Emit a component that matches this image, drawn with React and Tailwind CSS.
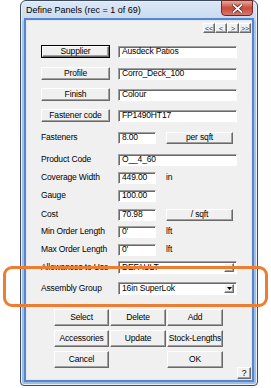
import React from "react";

const raised =
  "flex items-center justify-center bg-[#f0f0f0] border border-t-white border-l-white border-r-[#696969] border-b-[#696969] shadow-[inset_-1px_-1px_0_#a0a0a0]";
const sunken =
  "flex items-center bg-white border border-t-[#a0a0a0] border-l-[#a0a0a0] border-r-white border-b-white shadow-[inset_1px_1px_0_#696969] pl-[3px]";

const Label = ({ children }) => <div className="w-[77px] shrink-0">{children}</div>;

const Combo = ({ value }) => (
  <div className={`${sunken} w-[119px] h-[13px] justify-between pr-[2px]`}>
    <span>{value}</span>
    <div className={`${raised} w-[10px] h-[9px]`}>
      <svg width="5" height="3" viewBox="0 0 5 3">
        <path d="M0 0h5L2.5 3z" fill="#000" />
      </svg>
    </div>
  </div>
);

export default function App() {
  const rows = [
    { mt: "mt-[9px]", btn: "Profile", value: "Corro_Deck_100" },
    { mt: "mt-[8px]", btn: "Finish", value: "Colour" },
    { mt: "mt-[8px]", btn: "Fastener code", value: "FP1490HT17" },
  ];

  return (
    <div className="relative w-[271px] h-[388px] bg-white overflow-hidden font-['Liberation_Sans',Arial,sans-serif] text-[8.5px] leading-none text-black tracking-[-0.15px]">
      <div className="ml-[20px] w-[238px] h-[386px] flex flex-col rounded-t-[6px] rounded-b-[4px] border border-[#3c4b60] bg-[linear-gradient(to_bottom,#dce8f7_0px,#c8daf0_19px,#a9c5ea_20px,#9dbde6_100%)] shadow-[inset_0_0_0_1px_#e8f0fa]">
        {/* title bar */}
        <div className="h-[19px] flex items-start justify-between pl-[5px] pr-[4px]">
          <span className="mt-[5px] text-[9px] tracking-normal">Define Panels (rec = 1 of 69)</span>
          <div className="w-[32px] h-[16px] -mt-px flex items-center justify-center rounded-b-[4px] border border-[#6b2b2b] bg-gradient-to-b from-[#e9a898] via-[#c94a3a] to-[#d9766c]">
            <svg width="11" height="9" viewBox="0 0 11 9">
              <path d="M1.5 1l8 7M9.5 1l-8 7" stroke="#4a1a1a" strokeWidth="3.2" strokeLinecap="square" />
              <path d="M1.5 1l8 7M9.5 1l-8 7" stroke="#fff" strokeWidth="1.8" strokeLinecap="square" />
            </svg>
          </div>
        </div>

        {/* client area */}
        <div className="flex-1 mx-[5px] mb-[5px] border border-[#dfe8f4] shadow-[0_0_0_2px_#5886cc] bg-[#f0f0f0] flex flex-col">
          <div className="mt-[2px] flex justify-end">
            {["<<", "<", ">", ">>"].map((t) => (
              <div key={t} className={`${raised} w-[12px] h-[10px] text-[7px] text-[#333]`}>
                {t}
              </div>
            ))}
          </div>

          <div className="pl-[14px] flex flex-col">
            {/* Supplier */}
            <div className="mt-[12px] flex items-center h-[13px]">
              <div className="w-[77px] shrink-0">
                <div className="w-[69px] h-[13px] border border-black">
                  <div className={`${raised} w-full h-full`}>Supplier</div>
                </div>
              </div>
              <div className={`${sunken} w-[119px] h-[12px]`}>Ausdeck Patios</div>
            </div>

            {rows.map((r) => (
              <div key={r.btn} className={`${r.mt} flex items-center h-[13px]`}>
                <div className="w-[77px] shrink-0">
                  <div className={`${raised} w-[69px] h-[13px]`}>{r.btn}</div>
                </div>
                <div className={`${sunken} w-[119px] h-[12px]`}>{r.value}</div>
              </div>
            ))}

            <div className="mt-[9px] flex items-center h-[13px]">
              <Label>Fasteners</Label>
              <div className={`${sunken} w-[38px] h-[12px]`}>8.00</div>
              <div className={`${raised} ml-[10px] w-[67px] h-[12px]`}>per sqft</div>
            </div>

            <div className="mt-[9px] flex items-center h-[13px]">
              <Label>Product Code</Label>
              <div className={`${sunken} w-[119px] h-[12px]`}>O__4_60</div>
            </div>

            <div className="mt-[5px] flex items-center h-[13px]">
              <Label>Coverage Width</Label>
              <div className={`${sunken} w-[38px] h-[12px]`}>449.00</div>
              <span className="ml-[10px]">in</span>
            </div>

            <div className="mt-[5px] flex items-center h-[13px]">
              <Label>Gauge</Label>
              <div className={`${sunken} w-[38px] h-[12px]`}>100.00</div>
            </div>

            <div className="mt-[6px] flex items-center h-[13px]">
              <Label>Cost</Label>
              <div className={`${sunken} w-[38px] h-[12px]`}>70.98</div>
              <div className={`${raised} ml-[10px] w-[67px] h-[12px]`}>/ sqft</div>
            </div>

            <div className="mt-[4px] flex items-center h-[13px]">
              <Label>Min Order Length</Label>
              <div className={`${sunken} w-[38px] h-[12px]`}>0'</div>
              <span className="ml-[10px]">lft</span>
            </div>

            <div className="mt-[5px] flex items-center h-[13px]">
              <Label>Max Order Length</Label>
              <div className={`${sunken} w-[38px] h-[12px]`}>0'</div>
              <span className="ml-[10px]">lft</span>
            </div>

            <div className="mt-[5px] flex items-center h-[13px]">
              <Label>Allowances to Use</Label>
              <Combo value="DEFAULT" />
            </div>

            <div className="mt-[8px] flex items-center h-[13px]">
              <Label>Assembly Group</Label>
              <Combo value="16in SuperLok" />
            </div>
          </div>

          {/* action buttons */}
          <div className="mt-[14px] pl-[27px] grid grid-cols-[55px_56px_56px] gap-x-[1px] gap-y-[4px] w-fit">
            <div className={`${raised} h-[17px]`}>Select</div>
            <div className={`${raised} h-[17px]`}>Delete</div>
            <div className={`${raised} h-[17px]`}>Add</div>
            <div className={`${raised} h-[17px]`}>Accessories</div>
            <div className={`${raised} h-[17px]`}>Update</div>
            <div className={`${raised} h-[17px]`}>Stock-Lengths</div>
            <div className={`${raised} h-[17px]`}>Cancel</div>
            <div />
            <div className={`${raised} h-[17px]`}>OK</div>
          </div>

          <div className="-mt-px flex justify-end">
            <div className={`${raised} w-[14px] h-[12px]`}>?</div>
          </div>
        </div>
      </div>

      {/* highlight callout */}
      <div className="absolute left-[3px] top-[266px] w-[265px] h-[41px] rounded-[9px] border-[3px] border-[#ed7d31]" />
    </div>
  );
}
